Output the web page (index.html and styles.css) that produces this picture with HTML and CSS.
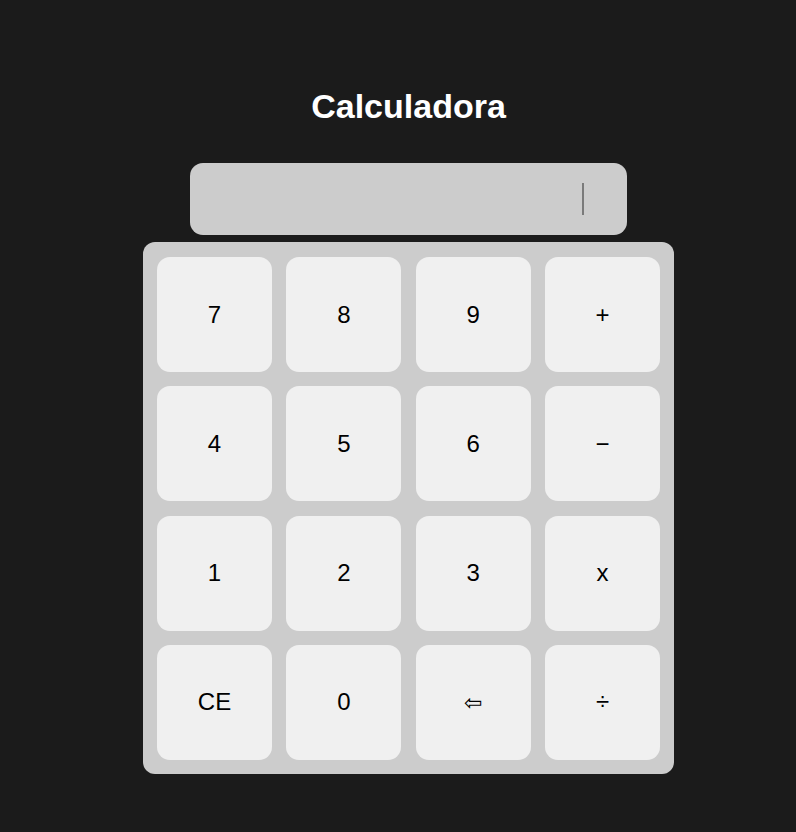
FILE: index.html
```html
<!DOCTYPE html>
<html lang="pt">
<head>
<meta charset="utf-8">
<title>Calculadora</title>
<link rel="stylesheet" href="styles.css">
</head>
<body>
<main class="app">
  <h1 class="title">Calculadora</h1>
  <div class="display"><span class="caret"></span></div>
  <div class="keypad">
    <button class="key">7</button>
    <button class="key">8</button>
    <button class="key">9</button>
    <button class="key">+</button>
    <button class="key">4</button>
    <button class="key">5</button>
    <button class="key">6</button>
    <button class="key">−</button>
    <button class="key">1</button>
    <button class="key">2</button>
    <button class="key">3</button>
    <button class="key">x</button>
    <button class="key">CE</button>
    <button class="key">0</button>
    <button class="key arrow">⇦</button>
    <button class="key">÷</button>
  </div>
</main>
</body>
</html>
```
FILE: styles.css
```css
html, body {
  margin: 0;
  padding: 0;
  background: #1b1b1b;
}
body {
  font-family: "Liberation Sans", Arial, sans-serif;
}
.app {
  display: flex;
  flex-direction: column;
  align-items: center;
  padding-top: 86px;
  padding-left: 21px;
}
.title {
  margin: 0;
  color: #ffffff;
  font-size: 34px;
  font-weight: bold;
  line-height: 40px;
  height: 40px;
}
.display {
  margin-top: 37px;
  width: 437px;
  height: 72px;
  background: #cccccc;
  border-radius: 13px;
  display: flex;
  align-items: center;
  justify-content: flex-end;
  padding-right: 43px;
  box-sizing: border-box;
}
.caret {
  width: 2px;
  height: 32px;
  background: #7a7a7a;
}
.keypad {
  margin-top: 7px;
  width: 531px;
  box-sizing: border-box;
  padding: 15px 14px 14px;
  background: #cccccc;
  border-radius: 12px;
  display: grid;
  grid-template-columns: repeat(4, 115px);
  grid-auto-rows: 115px;
  column-gap: 14.33px;
  row-gap: 14.33px;
}
.key {
  border: none;
  margin: 0;
  padding: 0;
  background: #f0f0f0;
  border-radius: 13px;
  font-family: "Liberation Sans", Arial, sans-serif;
  font-size: 24px;
  color: #000000;
  display: flex;
  align-items: center;
  justify-content: center;
}
.arrow {
  font-family: "DejaVu Sans", sans-serif;
  font-size: 22px;
}
```
